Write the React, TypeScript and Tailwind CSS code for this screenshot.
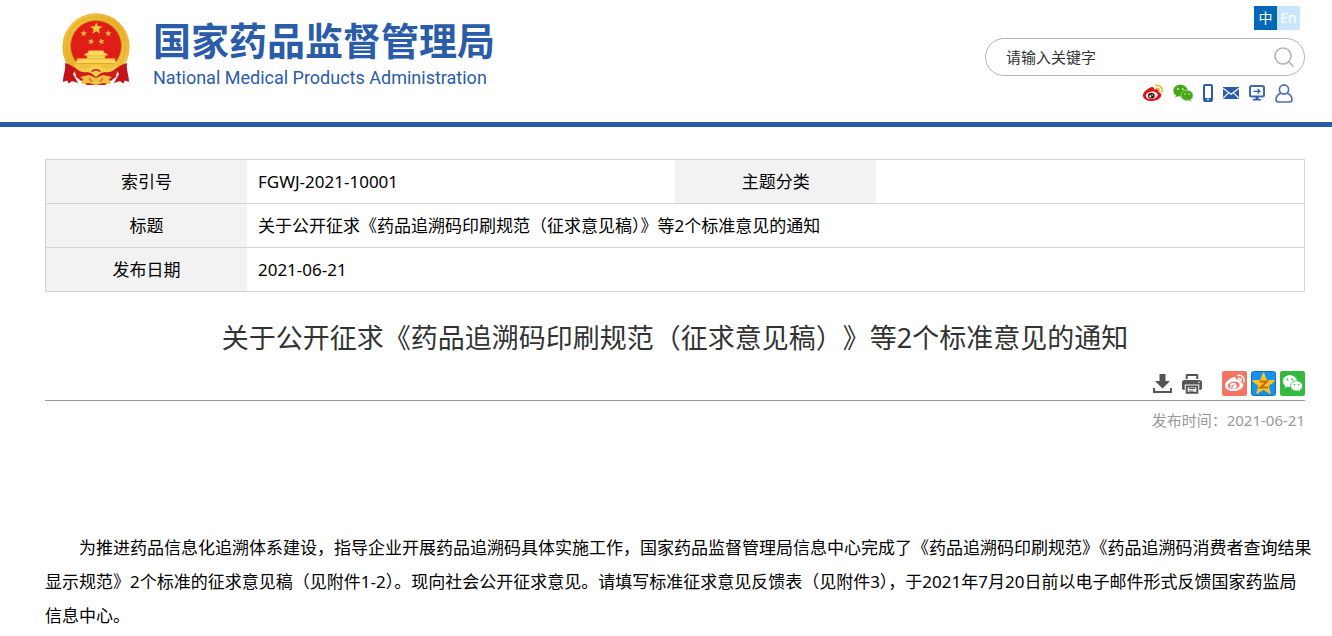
import React from 'react';
import { Search } from 'lucide-react';

const star = (cx: number, cy: number, r: number, rotate = 0) =>
  Array.from({ length: 10 }, (_, i) => {
    const radius = i % 2 === 0 ? r : r * 0.42;
    const angle = ((i * 36 - 90 + rotate) * Math.PI) / 180;
    return `${(cx + radius * Math.cos(angle)).toFixed(2)},${(cy + radius * Math.sin(angle)).toFixed(2)}`;
  }).join(' ');

const Emblem: React.FC = () => (
  <svg viewBox="0 0 70 74" className="h-[74px] w-[70px] shrink-0" aria-hidden="true">
    <defs>
      <linearGradient id="gold" x1="0" y1="0" x2="1" y2="1">
        <stop offset="0" stopColor="#f3c63f" />
        <stop offset="0.5" stopColor="#e8b02c" />
        <stop offset="1" stopColor="#f4cb48" />
      </linearGradient>
    </defs>
    <circle cx="35" cy="35" r="33.7" fill="url(#gold)" />
    <circle cx="35" cy="34.5" r="29.5" fill="none" stroke="#e0ab30" strokeWidth="1.2" strokeDasharray="5 1.5" />
    <circle cx="35" cy="34" r="25.5" fill="#e01e18" stroke="#cf921c" strokeWidth="0.8" />
    <polygon points={star(35.3, 16.5, 6.6)} fill="#f7c93b" />
    <polygon points={star(22.7, 21.5, 3.4)} fill="#f2bb38" />
    <polygon points={star(47.3, 21.5, 3.4)} fill="#f2bb38" />
    <polygon points={star(30, 29.5, 3.4, 12)} fill="#f2bb38" />
    <polygon points={star(40.5, 29.5, 3.4, -12)} fill="#f2bb38" />
    <path d="M28 38.5h14l1.500 2.500H45l2 2.500h-3v3h10l1 5H15l1-5h10v-3h-3l2-2.500h1.500z" fill="#f9d957" />
    <path d="M25 43.8h20M16 47h38" stroke="#e2ab34" strokeWidth="0.7" />
    <path d="M13 51.500h44v5H13z" fill="#f1c03a" />
    {/* ribbon and wheat sheaves */}
    <path d="M4 51c4 1 8 3 11 6l-3 5 5 9-6-2-3 2.500-2-3-4 1.500c0-7 3-12 2-19z" fill="#c51318" />
    <path d="M66 51c-4 1-8 3-11 6l3 5-5 9 6-2 3 2.500 2-3 4 1.500c0-7-3-12-2-19z" fill="#c51318" />
    <path d="M13 55c7 5 12 5 18 2l4-3 4 3c6 3 11 3 18-2l-2 10-11 8H26L15 65z" fill="#d61a1b" />
    <path d="M13 52c6 5 11 5 16 3 2-2 4-2.500 6-2.500s4 .5 6 2.500c5 2 10 2 16-3-2 6-7 9-13 8l-4 1-5 4-5-4-4-1c-6 1-11-2-13-8z" fill="#f5cd4b" />
    <path d="M19 65l9-2 7 3 7-3 9 2-3 2 2 5-8-1-7 2-7-2-8 1 2-5z" fill="#f0c23f" />
    <path d="M31 60c1-3 7-3 8 0" fill="none" stroke="#d61a1b" strokeWidth="1.3" />
    <path d="M28 66l3 4M42 66l-3 4" stroke="#d61a1b" strokeWidth="1" />
  </svg>
);

const WeiboShape: React.FC<{ body: string; waves: string; eye: string; iris: string }> = ({ body, waves, eye, iris }) => (
  <>
    <path
      d="M8 4.200C10 3.500 11.500 4.500 11.200 6.700c2.600-.9 4.900-.4 4.400 2.200 2 .7 2.900 2 2.700 3.400-.5 3.500-4.800 5.700-9.300 5.700C4 18 0 15.900 0 12.400 0 9.300 4.200 5.600 8 4.200z"
      fill={body}
    />
    <ellipse cx="8.700" cy="12.300" rx="6" ry="3.700" fill={eye} transform="rotate(-7 8.700 12.300)" />
    <ellipse cx="8.300" cy="12.700" rx="3.400" ry="2.900" fill={iris} />
    <circle cx="7.200" cy="13.300" r="1.100" fill={eye} />
    <circle cx="9.300" cy="11.900" r="0.700" fill={eye} />
    <path d="M13.600 5.200c1.700-.3 2.900 1 2.500 2.600M12.900 2.400c3.800-.9 7 2.300 6 6.400" fill="none" stroke={waves} strokeWidth="1.500" strokeLinecap="round" />
  </>
);

const WechatShape: React.FC<{ fill: string; hole: string; gap: string }> = ({ fill, hole, gap }) => (
  <>
    <path d="M7.400 1.800C3.400 1.800.3 4.400.3 7.700c0 1.900 1 3.500 2.600 4.600l-.7 2.100 2.500-1.200c.9.200 1.700.4 2.700.4 3.900 0 7-2.600 7-5.900s-3.100-5.900-7-5.900z" fill={fill} />
    <path d="M14 7.300c-3.400 0-6 2.300-6 5.100s2.600 5.100 6 5.100c.8 0 1.500-.1 2.200-.3l2 1.100-.5-1.800c1.400-1 2.300-2.400 2.300-4.100 0-2.800-2.700-5.100-6-5.100z" fill={fill} stroke={gap} strokeWidth="0.800" />
    <circle cx="5" cy="6" r="0.900" fill={hole} />
    <circle cx="9.700" cy="6" r="0.900" fill={hole} />
    <circle cx="12" cy="11" r="0.800" fill={hole} />
    <circle cx="16" cy="11" r="0.800" fill={hole} />
  </>
);

const quickLinks = [
  {
    label: '微博',
    icon: (
      <svg viewBox="0 0 20 20" className="size-5">
        <WeiboShape body="#e01217" waves="#f2b01e" eye="#fff" iris="#4a1414" />
      </svg>
    )
  },
  {
    label: '微信',
    icon: (
      <svg viewBox="0 0 20 20" className="size-5">
        <WechatShape fill="#46a818" hole="#d6efc8" gap="#a5d68c" />
      </svg>
    )
  },
  {
    label: '手机版',
    icon: (
      <svg viewBox="0 0 10 18" className="h-[18px] w-2.5">
        <rect x="1" y="1" width="8" height="16" rx="1" fill="#fff" stroke="#2a5caa" strokeWidth="2" />
        <path d="M1 14h8v3H1z" fill="#2a5caa" />
        <circle cx="5" cy="15.500" r="0.900" fill="#fff" />
      </svg>
    )
  },
  {
    label: '邮箱',
    icon: (
      <svg viewBox="0 0 16 12" className="h-3 w-4">
        <path d="M0 0h16v12H0z" fill="#2a5caa" />
        <path d="M0 1.200l8 6 8-6M0 11.300l5.500-5.500M16 11.300l-5.500-5.500" fill="none" stroke="#fff" strokeWidth="1.100" />
      </svg>
    )
  },
  {
    label: '电脑版',
    icon: (
      <svg viewBox="0 0 16 16" className="size-4">
        <rect x="1" y="1" width="14" height="10.500" rx="1.500" fill="#fff" stroke="#3c69b2" strokeWidth="2" />
        <path d="M4.500 6.300h6M8.500 4l2.500 2.300-2.500 2.300" fill="none" stroke="#2a5caa" strokeWidth="1.200" />
        <path d="M6.500 11.500h3V14H12v1.500H4V14h2.500z" fill="#2a5caa" />
      </svg>
    )
  },
  {
    label: '个人中心',
    icon: (
      <svg viewBox="0 0 18 19" className="h-[19px] w-[18px]" fill="none" stroke="#4a6cb3" strokeWidth="1.600">
        <circle cx="9" cy="5.500" r="4.600" />
        <path d="M5.800 9.300C3 10.600 1 13 1 15.500c0 1.500.6 2.500 2.300 2.500h11.400c1.700 0 2.300-1 2.300-2.500 0-2.500-2-4.900-4.800-6.200" />
      </svg>
    )
  }
];

const shareButtons = [
  {
    label: '分享到微博',
    icon: (
      <svg viewBox="0 0 25 25" className="size-[25px]">
        <rect width="25" height="25" rx="2" fill="#f57465" />
        <g transform="translate(3 2)">
          <WeiboShape body="#fff" waves="#fff" eye="#f57465" iris="#fff" />
        </g>
      </svg>
    )
  },
  {
    label: '分享到QQ空间',
    icon: (
      <svg viewBox="0 0 25 25" className="size-[25px]">
        <rect x="0.500" y="0.500" width="24" height="24" rx="2" fill="#1593ea" stroke="#0f72bd" />
        <polygon points={star(12.5, 13.2, 11)} fill="#fdc41f" stroke="#fdc41f" strokeWidth="1.500" strokeLinejoin="round" />
        <path d="M8.500 10.500h7.500l-6.500 6h7.500" fill="none" stroke="#c9690c" strokeWidth="2" />
      </svg>
    )
  },
  {
    label: '分享到微信',
    icon: (
      <svg viewBox="0 0 25 25" className="size-[25px]">
        <rect width="25" height="25" rx="2" fill="#33bb3f" />
        <g transform="translate(2.500 2.500)">
          <WechatShape fill="#fff" hole="#33bb3f" gap="#33bb3f" />
        </g>
      </svg>
    )
  }
];

const Header: React.FC = () => (
  <header className="flex h-[127px] justify-between border-b-5 border-[#2a5caa] pr-[27px] pl-[61px]">
    <a href="#" className="flex items-start gap-[22px] pt-3 text-[#2a5caa]">
      <Emblem />
      <span className="flex flex-col pt-1.5">
        <span className="text-[38px] leading-[44px] font-bold">国家药品监督管理局</span>
        <span className="font-[Roboto,sans-serif] text-lg leading-8">National Medical Products Administration</span>
      </span>
    </a>

    <div className="flex w-80 flex-col pt-1.5">
      <div className="mr-[5px] flex self-end text-sm leading-6 text-white">
        <a href="#" className="w-[23px] bg-[#0068b7] text-center">中</a>
        <a href="#" className="w-[23px] bg-[#c9e6ff] text-center">En</a>
      </div>
      <form className="mt-2 flex h-[38px] items-center rounded-full border border-[#b5b5b5] pr-2 pl-5">
        <input
          type="text"
          aria-label="请输入关键字"
          placeholder="请输入关键字"
          className="min-w-0 flex-1 text-[15px] outline-none placeholder:text-[#333]"
        />
        <button type="button" aria-label="搜索">
          <Search className="size-6 text-[#b0b0b0]" strokeWidth={1.5} />
        </button>
      </form>
      <nav className="mt-[7px] mr-3 flex h-5 items-center justify-end gap-2.5">
        {quickLinks.map((link) => (
          <a key={link.label} href="#" aria-label={link.label}>
            {link.icon}
          </a>
        ))}
      </nav>
    </div>
  </header>
);

const InfoTable: React.FC = () => (
  <table className="w-full table-fixed border-collapse border border-[#d5d5d5] text-[17px] leading-[43px]">
    <colgroup>
      <col className="w-[16%]" />
      <col className="w-[34%]" />
      <col className="w-[16%]" />
      <col className="w-[34%]" />
    </colgroup>
    <tbody>
      <tr className="border-b border-[#d5d5d5]">
        <th className="bg-[#f2f2f2] font-normal">索引号</th>
        <td className="px-[11px]">FGWJ-2021-10001</td>
        <th className="bg-[#f2f2f2] font-normal">主题分类</th>
        <td />
      </tr>
      <tr className="border-b border-[#d5d5d5]">
        <th className="bg-[#f2f2f2] font-normal">标题</th>
        <td colSpan={3} className="px-[11px]">关于公开征求《药品追溯码印刷规范（征求意见稿）》等2个标准意见的通知</td>
      </tr>
      <tr>
        <th className="bg-[#f2f2f2] font-normal">发布日期</th>
        <td colSpan={3} className="px-[11px]">2021-06-21</td>
      </tr>
    </tbody>
  </table>
);

const Toolbar: React.FC = () => (
  <div className="mt-[11px] flex items-center justify-end border-b border-[#999] pb-1">
    <button type="button" aria-label="下载" className="mr-2.5">
      <svg viewBox="0 0 19 19" className="size-[19px]" fill="#555">
        <path d="M6.500 0h6v7h4.500l-7.500 7.500L2 7h4.500z" />
        <path d="M0 14h2v3h15v-3h2v5H0z" />
      </svg>
    </button>
    <button type="button" aria-label="打印" className="mr-5">
      <svg viewBox="0 0 20 20" className="size-5" fill="#555">
        <path d="M5 0h10c.8 0 1.300.6 1.300 1.300V5h-2V2H5.700v3h-2V1.300C3.700.6 4.200 0 5 0z" />
        <path d="M2.500 6h15C19 6 20 7 20 8.500V14c0 1.200-.8 2-2 2h-.7v-5.500H2.700V16H2c-1.200 0-2-.8-2-2V8.500C0 7 1 6 2.500 6z" />
        <path d="M4.700 12.500h10.600v6.300H4.700z" fill="#fff" stroke="#555" strokeWidth="2" />
        <path d="M7 14.500h6M7 17h4.500" stroke="#555" strokeWidth="1.200" />
        <circle cx="17" cy="8.300" r="0.800" fill="#fff" />
      </svg>
    </button>
    <div className="flex gap-1">
      {shareButtons.map((button) => (
        <button key={button.label} type="button" aria-label={button.label}>
          {button.icon}
        </button>
      ))}
    </div>
  </div>
);

const App: React.FC = () => {
  return (
    <div className="bg-white font-['Noto_Sans','Noto_Sans_CJK_SC',sans-serif] text-black" lang="zh-CN">
      <Header />
      <main className="pt-8 pr-[27px] pl-[45px]">
        <InfoTable />
        <h1 className="mt-6 text-center text-[27px] leading-[44px] text-[#333] [text-spacing-trim:space-all]">
          关于公开征求《药品追溯码印刷规范（征求意见稿）》等2个标准意见的通知
        </h1>
        <Toolbar />
        <p className="mt-[7px] text-right text-[15px] leading-6 text-[#999]">发布时间：2021-06-21</p>
        <article className="mt-[99px] -mr-2 text-[17px] leading-[34px]">
          <p className="indent-[2em]">
            为推进药品信息化追溯体系建设，指导企业开展药品追溯码具体实施工作，国家药品监督管理局信息中心完成了《药品追溯码印刷规范》《药品追溯码消费者查询结果显示规范》2个标准的征求意见稿（见附件1-2）。现向社会公开征求意见。请填写标准征求意见反馈表（见附件3），于2021年7月20日前以电子邮件形式反馈国家药监局信息中心。
          </p>
        </article>
      </main>
    </div>
  );
};

export default App;
